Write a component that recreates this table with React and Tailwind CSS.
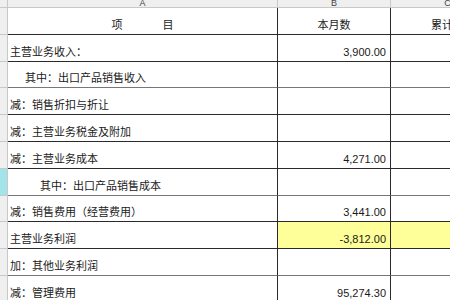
const rows = [
  { h: 'h-[27px]', a: '主营业务收入：', pad: 'pl-[2px]', b: '3,900.00' },
  { h: 'h-[26px]', a: '其中：出口产品销售收入', pad: 'pl-[17px]', b: '', line: 'border-b-[#777]' },
  { h: 'h-[27px]', a: '减：销售折扣与折让', pad: 'pl-[2px]', b: '' },
  { h: 'h-[27px]', a: '减：主营业务税金及附加', pad: 'pl-[2px]', b: '' },
  { h: 'h-[27px]', a: '减：主营业务成本', pad: 'pl-[2px]', b: '4,271.00' },
  { h: 'h-[27px]', a: '其中：出口产品销售成本', pad: 'pl-[32px]', b: '', line: 'border-b-[#777]', selected: true },
  { h: 'h-[26px]', a: '减：销售费用（经营费用）', pad: 'pl-[2px]', b: '3,441.00' },
  { h: 'h-[27px]', a: '主营业务利润', pad: 'pl-[2px]', b: '-3,812.00', yellow: true },
  { h: 'h-[27px]', a: '加：其他业务利润', pad: 'pl-[2px]', b: '', line: 'border-b-[#777]' },
  { h: 'h-[27px]', a: '减：管理费用', pad: 'pl-[2px]', b: '95,274.30' },
]

export default function App() {
  return (
    <div className="h-[300px] w-[450px] overflow-hidden bg-white font-['Liberation_Sans','Noto_Sans_CJK_SC',sans-serif] text-[11px] text-[#1a1a1a]">
      <div className="flex h-[8px] w-[620px] border-b border-[#c8c8c8] bg-[#efefef] text-[9px] leading-[7px] text-[#444]">
        <div className="w-[8px] border-r border-[#c8c8c8]" />
        <div className="flex w-[270px] items-end justify-center overflow-hidden border-r border-[#c8c8c8]">A</div>
        <div className="flex w-[113px] items-end justify-center overflow-hidden border-r border-[#c8c8c8]">B</div>
        <div className="flex w-[114px] items-end justify-center overflow-hidden border-r border-[#c8c8c8]">C</div>
      </div>

      <div className="flex h-[27px] w-[620px]">
        <div className="w-[8px] border-r border-b border-[#c8c8c8] bg-[#efefef]" />
        <div className="flex w-[270px] items-end justify-center border-r border-b border-[#2a2a2a] pb-[1px]">
          <span>项</span>
          <span className="ml-[40px]">目</span>
        </div>
        <div className="flex w-[113px] items-end justify-center border-r border-b border-[#2a2a2a] pb-[1px]">本月数</div>
        <div className="flex w-[114px] items-end justify-center border-r border-b border-[#2a2a2a] pb-[1px]">累计数</div>
      </div>

      {rows.map((row) => (
        <div key={row.a} className={`flex w-[620px] ${row.h}`}>
          <div className={`w-[8px] border-r border-b border-[#c8c8c8] ${row.selected ? 'bg-[#a3e4ea]' : 'bg-[#efefef]'}`} />
          <div className={`flex w-[270px] items-end border-r border-b border-[#2a2a2a] pb-[1px] ${row.pad} ${row.line || ''}`}>{row.a}</div>
          <div className={`flex w-[113px] items-end justify-end border-r border-b border-[#2a2a2a] pr-[4px] pb-[1px] ${row.line || ''} ${row.yellow ? 'bg-[#ffff99]' : ''}`}>{row.b}</div>
          <div className={`w-[114px] border-r border-b border-[#2a2a2a] ${row.line || ''} ${row.yellow ? 'bg-[#ffff99]' : ''}`} />
        </div>
      ))}
    </div>
  )
}
